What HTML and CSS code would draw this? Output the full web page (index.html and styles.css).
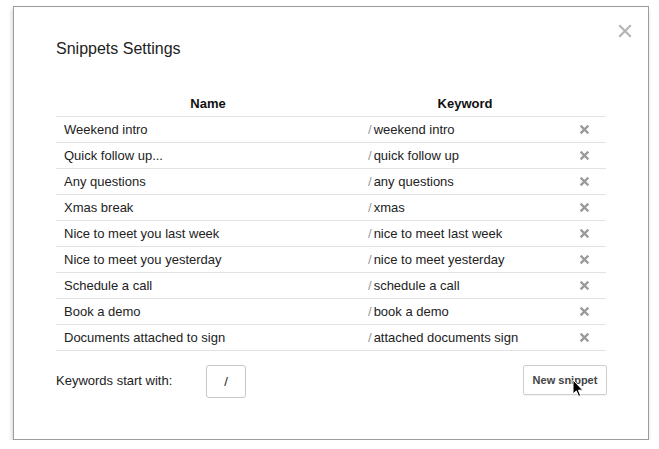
FILE: index.html
```html
<!DOCTYPE html>
<html>
<head>
<meta charset="utf-8">
<link rel="stylesheet" href="styles.css">
</head>
<body>
<div class="dialog">
  <svg class="close" width="14" height="14" viewBox="0 0 14 14"><path d="M2 2L12 12M12 2L2 12" stroke="#b5b5b5" stroke-width="2.2" stroke-linecap="square"/></svg>
  <h1 class="title">Snippets Settings</h1>
  <table class="snippets">
    <thead>
      <tr><th class="c-name">Name</th><th class="c-key">Keyword</th><th class="c-del"></th></tr>
    </thead>
    <tbody>
      <tr><td class="c-name">Weekend intro</td><td class="c-key"><span class="slash">/</span>weekend intro</td><td class="c-del"><svg class="del" width="9" height="9" viewBox="0 0 9 9"><path d="M1.5 1.5L7.5 7.5M7.5 1.5L1.5 7.5"/></svg></td></tr>
      <tr><td class="c-name">Quick follow up...</td><td class="c-key"><span class="slash">/</span>quick follow up</td><td class="c-del"><svg class="del" width="9" height="9" viewBox="0 0 9 9"><path d="M1.5 1.5L7.5 7.5M7.5 1.5L1.5 7.5"/></svg></td></tr>
      <tr><td class="c-name">Any questions</td><td class="c-key"><span class="slash">/</span>any questions</td><td class="c-del"><svg class="del" width="9" height="9" viewBox="0 0 9 9"><path d="M1.5 1.5L7.5 7.5M7.5 1.5L1.5 7.5"/></svg></td></tr>
      <tr><td class="c-name">Xmas break</td><td class="c-key"><span class="slash">/</span>xmas</td><td class="c-del"><svg class="del" width="9" height="9" viewBox="0 0 9 9"><path d="M1.5 1.5L7.5 7.5M7.5 1.5L1.5 7.5"/></svg></td></tr>
      <tr><td class="c-name">Nice to meet you last week</td><td class="c-key"><span class="slash">/</span>nice to meet last week</td><td class="c-del"><svg class="del" width="9" height="9" viewBox="0 0 9 9"><path d="M1.5 1.5L7.5 7.5M7.5 1.5L1.5 7.5"/></svg></td></tr>
      <tr><td class="c-name">Nice to meet you yesterday</td><td class="c-key"><span class="slash">/</span>nice to meet yesterday</td><td class="c-del"><svg class="del" width="9" height="9" viewBox="0 0 9 9"><path d="M1.5 1.5L7.5 7.5M7.5 1.5L1.5 7.5"/></svg></td></tr>
      <tr><td class="c-name">Schedule a call</td><td class="c-key"><span class="slash">/</span>schedule a call</td><td class="c-del"><svg class="del" width="9" height="9" viewBox="0 0 9 9"><path d="M1.5 1.5L7.5 7.5M7.5 1.5L1.5 7.5"/></svg></td></tr>
      <tr><td class="c-name">Book a demo</td><td class="c-key"><span class="slash">/</span>book a demo</td><td class="c-del"><svg class="del" width="9" height="9" viewBox="0 0 9 9"><path d="M1.5 1.5L7.5 7.5M7.5 1.5L1.5 7.5"/></svg></td></tr>
      <tr><td class="c-name">Documents attached to sign</td><td class="c-key"><span class="slash">/</span>attached documents sign</td><td class="c-del"><svg class="del" width="9" height="9" viewBox="0 0 9 9"><path d="M1.5 1.5L7.5 7.5M7.5 1.5L1.5 7.5"/></svg></td></tr>
    </tbody>
  </table>
  <div class="footer">
    <span class="label">Keywords start with:</span>
    <div class="prefix">/</div>
    <div class="spacer"></div>
    <div class="btn-wrap">
      <button class="btn">New snippet</button>
      <svg class="cursor" width="12" height="19" viewBox="0 0 12 19"><path d="M1 1L1 15L4.3 11.9L6.6 17.4L8.6 16.5L6.4 11.2L10.8 11.2Z" fill="#000" stroke="#fff" stroke-width="1" stroke-linejoin="round"/></svg>
    </div>
  </div>
</div>
</body>
</html>
```
FILE: styles.css
```css
html, body {
  margin: 0;
  padding: 0;
  background: #fff;
}
body {
  font-family: "Liberation Sans", Arial, sans-serif;
  color: #222;
  padding: 6px 0 0 13px;
}
.dialog {
  position: relative;
  box-sizing: border-box;
  width: 636px;
  height: 434px;
  border: 1px solid #9c9c9c;
  background: #fff;
  box-shadow: -1px 3px 4px rgba(0,0,0,0.18);
  padding: 0 41px 0 42px;
}
.close {
  position: absolute;
  top: 17px;
  right: 16px;
}
.title {
  margin: 32px 0 0;
  font-size: 16px;
  font-weight: normal;
  line-height: 20px;
  color: #222;
}
.snippets {
  margin-top: 32px;
  width: 550px;
  border-collapse: collapse;
  font-size: 13px;
  table-layout: fixed;
}
.snippets th {
  font-weight: bold;
  height: 25px;
  padding: 0;
  border-bottom: 1px solid #e2e2e2;
  text-align: center;
  vertical-align: middle;
  color: #111;
}
.snippets td {
  height: 25px;
  padding: 0;
  border-bottom: 1px solid #e2e2e2;
  vertical-align: middle;
  color: #222;
}
.c-name { width: 304px; }
.c-key { width: 210px; }
.c-del { width: 36px; }
td.c-name { padding-left: 8px !important; }
td.c-key { padding-left: 8px !important; }
th.c-key { padding-left: 0; }
td.c-del { text-align: left; padding-left: 10px !important; }
.slash {
  color: #999;
  margin-right: 2px;
}
.del {
  display: block;
}
.del path {
  stroke: #9a9a9a;
  stroke-width: 2.4;
  stroke-linecap: square;
}
.footer {
  display: flex;
  align-items: flex-start;
  margin-top: 14px;
}
.label {
  width: 150px;
  font-size: 13px;
  line-height: 16px;
  margin-top: 8px;
  color: #222;
}
.prefix {
  box-sizing: border-box;
  width: 40px;
  height: 33px;
  border: 1px solid #c8c8c8;
  border-radius: 3px;
  font-size: 13px;
  line-height: 31px;
  text-align: center;
  color: #222;
}
.spacer { flex: 1; }
.btn-wrap {
  position: relative;
}
.btn {
  display: block;
  box-sizing: border-box;
  width: 84px;
  height: 30px;
  border: 1px solid #cfcfcf;
  border-radius: 2px;
  background: #fff;
  font-family: "Liberation Sans", Arial, sans-serif;
  font-size: 11px;
  font-weight: bold;
  color: #444;
  padding: 0;
  box-shadow: 0 1px 1px rgba(0,0,0,0.05);
}
.cursor {
  position: absolute;
  left: 49px;
  top: 14px;
}
```
